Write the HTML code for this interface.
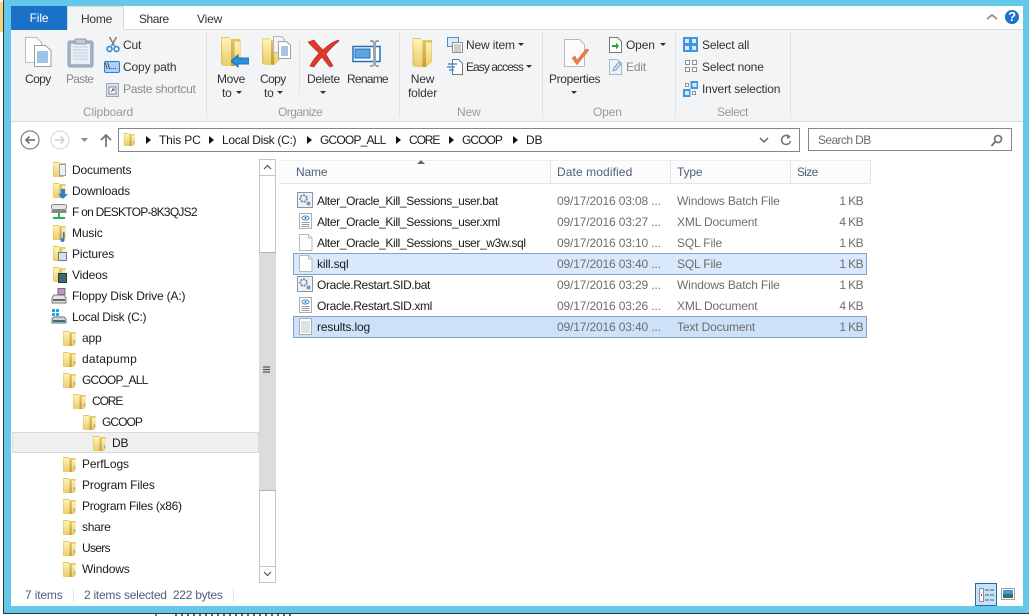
<!DOCTYPE html>
<html><head><meta charset="utf-8"><style>
html,body{margin:0;padding:0;background:#fff}
#r{position:relative;width:1029px;height:616px;overflow:hidden;background:#fff;font-family:"Liberation Sans",sans-serif;font-size:12px;color:#1a1a1a}
#r div,#r svg{position:absolute}
.t{white-space:nowrap;line-height:16px;letter-spacing:-.15px}
.g{color:#8a8a8a}.s{color:#9a9a9a}.c{text-align:center}
.d{color:#6d6d6d}.h{color:#4c607a}
.b{background:#e2e3e4;width:1px}
.k{text-align:right;width:40px;left:823px;letter-spacing:-.6px}
.a{letter-spacing:-.38px}
</style></head><body><div id="r">
<svg width="0" height="0"><defs>
<linearGradient id="y" x1="0" y1="0" x2="0" y2="1"><stop offset="0" stop-color="#fdf3b6"/><stop offset="1" stop-color="#eccb6c"/></linearGradient>
<linearGradient id="z" x1="0" y1="0" x2="0" y2="1"><stop offset="0" stop-color="#e3c366"/><stop offset="1" stop-color="#c49c3a"/></linearGradient>
<symbol id="f" viewBox="0 0 16 18"><path d="M1 1h6l1 1h6.500v13l-2 2H2l-1-1z" fill="#e6c565"/><path d="M1.500 2h6.500v15H2z" fill="url(#y)"/><path d="M8 2.500l2.500 1V17H8z" fill="url(#z)"/><path d="M10.500 3.500L14.500 4v11l-4 2z" fill="url(#y)"/><path d="M13.200 11v2.500" stroke="#5c9ed8"/></symbol>
<symbol id="F" viewBox="0 0 22 32"><path d="M1 1h8l2 2h9.500v22l-6 5H3l-2-2z" fill="#e4c060"/><path d="M1.500 2H11v28H3z" fill="url(#y)"/><path d="M11 3.500l3.500 1.500v25H11z" fill="url(#z)"/><path d="M14.500 5l5.500 1v19l-5.500 5z" fill="url(#y)"/></symbol>
<symbol id="p" viewBox="0 0 15 17"><path d="M1.500 .5h9l3.500 3.500v12.500h-12.500z" fill="#fff" stroke="#b9b9b9"/><path d="M10.500 .5v3.500h3.500" fill="#eee" stroke="#b9b9b9"/></symbol>
<symbol id="bat" viewBox="0 0 16 16"><rect x=".5" y=".5" width="15" height="15" fill="#eef1f5" stroke="#8c96a3"/><circle cx="6.500" cy="6.500" r="3.300" fill="none" stroke="#74828f" stroke-width="1.800" stroke-dasharray="2 1"/><circle cx="11.500" cy="11.500" r="2" fill="#6d9ac7"/></symbol>
<symbol id="xml" viewBox="0 0 15 16"><path d="M1.500 .5h12v15h-12z" fill="#fff" stroke="#adadad"/><ellipse cx="7.500" cy="5" rx="3.500" ry="2" fill="#fff" stroke="#3f8fd0"/><circle cx="7.500" cy="5" r="1" fill="#2a78bc"/><path d="M3.500 9.500h8M3.500 11.500h8M3.500 13.500h8" stroke="#9a9a9a"/></symbol>
</defs></svg>

<!-- window frame -->
<div style="left:0;top:0;width:4px;height:616px;background:#fff"></div>
<div style="left:0;top:2px;width:4px;height:30px;background:#f2d780"></div>
<div style="left:3px;top:0;width:1px;height:614px;background:#333"></div>
<div style="left:4px;top:0;width:1025px;height:613px;background:#63c8ea"></div>
<div style="left:3px;top:613px;width:1026px;height:1px;background:#333"></div>
<div style="left:11px;top:6px;width:1012px;height:600px;background:#fff"></div>
<div style="left:155px;top:614px;width:2px;height:2px;background:#777"></div>
<div style="left:175px;top:614px;width:120px;height:2px;background:repeating-linear-gradient(90deg,#666 0 2px,transparent 2px 6px)"></div>

<!-- ribbon -->
<div style="left:11px;top:29px;width:1012px;height:93px;background:#f3f4f6;border-top:1px solid #dadbdc;border-bottom:1px solid #dadbdc;box-sizing:border-box"></div>
<div style="left:11px;top:6px;width:56px;height:24px;background:#1a72c8"></div>
<div class="t c" style="left:11px;top:10px;width:56px;color:#fff">File</div>
<div style="left:67px;top:6px;width:57px;height:24px;background:#f3f4f6;border:1px solid #dadbdc;border-bottom:0;box-sizing:border-box"></div>
<div class="t" style="left:81px;top:11px;color:#333;letter-spacing:-.25px">Home</div>
<div class="t" style="left:139px;top:11px;color:#333;letter-spacing:-.45px">Share</div>
<div class="t" style="left:197px;top:11px;color:#333">View</div>
<svg style="left:985px;top:12px" width="14" height="9"><path d="M2 7l5-4 5 4" fill="none" stroke="#9a9a9a" stroke-width="2"/></svg>
<div style="left:1005px;top:10px;width:14px;height:14px;border-radius:50%;background:#1a72c8"></div>
<div class="t c" style="left:1005px;top:9px;width:14px;color:#fff;font-weight:bold;font-size:13px">?</div>
<!-- separators -->
<div class="b" style="left:206px;top:32px;height:86px"></div>
<div class="b" style="left:399px;top:32px;height:86px"></div>
<div class="b" style="left:542px;top:32px;height:86px"></div>
<div class="b" style="left:675px;top:32px;height:86px"></div>
<div class="b" style="left:790px;top:32px;height:86px"></div>
<div class="b" style="left:299px;top:39px;height:55px"></div>

<!-- Clipboard -->
<svg style="left:24px;top:36px" width="29" height="32" viewBox="0 0 29 32"><path d="M1.500 1.500h11l5 5v20h-16z" fill="#fff" stroke="#bcbcbc"/><path d="M10.500 9.500h11l5.500 5v16h-16.500z" fill="#fff" stroke="#9d9d9d"/><path d="M13 16h11M13 18h11M13 20h11M13 22h11M13 24h11M13 26h11" stroke="#3f8ad4"/></svg>
<svg style="left:67px;top:37px" width="27" height="31" viewBox="0 0 27 31"><rect x="1" y="4" width="25" height="26" rx="2" fill="#a7b3c7" stroke="#8d9ab0"/><rect x="4" y="7" width="19" height="20" fill="#e9eef6"/><path d="M6 10h15M6 13h15M6 16h15M6 19h15M6 22h15" stroke="#c3cede"/><rect x="8" y="2" width="11" height="5" rx="1" fill="#c0c9d6" stroke="#8d9ab0"/></svg>
<div class="t" style="left:25px;top:71px;letter-spacing:-.6px;color:#333">Copy</div>
<div class="t g" style="left:66px;top:71px;letter-spacing:-.7px">Paste</div>
<svg style="left:106px;top:36px" width="14" height="17" viewBox="0 0 14 17"><path d="M3.500 1l5 9M10.500 1l-5 9" stroke="#7e7e7e" stroke-width="1.500"/><circle cx="3.500" cy="13" r="2.500" fill="none" stroke="#2a83d6" stroke-width="1.500"/><circle cx="10.500" cy="13" r="2.500" fill="none" stroke="#2a83d6" stroke-width="1.500"/></svg>
<div class="t" style="left:123px;top:37px;color:#333">Cut</div>
<div style="left:104px;top:61px;width:14px;height:10px;background:#a9d2f6;border:1px solid #2a7fcf;border-radius:2px"></div>
<div class="t" style="left:105px;top:58px;font-size:9px;color:#123">\\...</div>
<div class="t" style="left:123px;top:59px;color:#333">Copy path</div>
<svg style="left:106px;top:82px" width="13" height="15" viewBox="0 0 13 15"><rect x=".5" y="1.500" width="12" height="13" fill="#dde2ea" stroke="#9da8b8"/><rect x="3" y="5" width="7" height="7" fill="#fff" stroke="#7c8796"/><path d="M5 10l3-3M6 7h2v2" stroke="#667" fill="none"/></svg>
<div class="t g" style="left:123px;top:81px;letter-spacing:-.3px">Paste shortcut</div>
<div class="t s" style="left:83px;top:104px">Clipboard</div>

<!-- Organize -->
<svg style="left:220px;top:36px" width="22" height="32"><use href="#F" width="22" height="32"/></svg>
<svg style="left:231px;top:54px" width="18" height="14" viewBox="0 0 18 14"><path d="M0 7l7-6v3h11v6H7v3z" fill="#2b8fdc" stroke="#1c6fb8"/></svg>
<div class="t" style="left:217px;top:71px;letter-spacing:-.35px;color:#333">Move</div>
<div class="t" style="left:222px;top:85px;color:#333">to</div>
<svg style="left:236px;top:91px" width="6" height="4"><path d="M0 0h6l-3 3z" fill="#333"/></svg>
<svg style="left:261px;top:36px" width="20" height="32"><use href="#F" width="20" height="32"/></svg>
<svg style="left:272px;top:36px" width="19" height="23" viewBox="0 0 19 23"><path d="M1.500.5h8l3 3v13h-11z" fill="#f4f4f4" stroke="#b5b5b5"/><path d="M6.500 5.500h8l4 4v13h-12z" fill="#fff" stroke="#9f9f9f"/><path d="M9 11h7M9 13h7M9 15h7M9 17h7M9 19h7" stroke="#4b8fcf"/></svg>
<div class="t" style="left:260px;top:71px;letter-spacing:-.6px;color:#333">Copy</div>
<div class="t" style="left:264px;top:85px;color:#333">to</div>
<svg style="left:277px;top:91px" width="6" height="4"><path d="M0 0h6l-3 3z" fill="#333"/></svg>
<svg style="left:307px;top:39px" width="33" height="29" viewBox="0 0 33 29"><path d="M1 3l6-2c3 4 6 7 9 10 4-4 9-8 15-10l1 1c-5 4-9 8-13 13 2 4 5 8 7 12l-3 1c-3-3-6-7-8-10-3 3-6 7-8 10l-4-1c2-5 6-9 9-13C8 10 4 7 1 3z" fill="#dd3a2c" stroke="#b22a20" stroke-width=".6"/></svg>
<div class="t" style="left:307px;top:71px;letter-spacing:-.3px;color:#333">Delete</div>
<svg style="left:320px;top:91px" width="6" height="4"><path d="M0 0h6l-3 3z" fill="#333"/></svg>
<svg style="left:352px;top:39px" width="30" height="28" viewBox="0 0 30 28"><rect x="1" y="7.500" width="27" height="15" fill="#fff" stroke="#1f6fb5" stroke-width="1.500"/><rect x="3" y="10" width="15" height="9" fill="#5aa6e0" stroke="#1f6fb5"/><path d="M18 2h2.500l2 2 2-2H27M18 27h2.500l2-2 2 2H27" fill="none" stroke="#8a8f96" stroke-width="1.500"/><rect x="21" y="3" width="3" height="23" fill="#a0a5ab"/></svg>
<div class="t" style="left:347px;top:71px;letter-spacing:-.75px;color:#333">Rename</div>
<div class="t s" style="left:278px;top:104px;letter-spacing:-.55px">Organize</div>

<!-- New -->
<svg style="left:411px;top:37px" width="23" height="32"><use href="#F" width="23" height="32"/></svg>
<div class="t c" style="left:400px;top:71px;width:45px;color:#333">New</div>
<div class="t c" style="left:400px;top:85px;width:45px;color:#333">folder</div>
<svg style="left:447px;top:37px" width="16" height="16" viewBox="0 0 16 16"><rect x=".5" y=".5" width="11" height="9" fill="#dcebfa" stroke="#4b90d0"/><path d="M5.500 5.500h10v10h-10z" fill="#fff" stroke="#8e8e8e"/><path d="M7 8h7M7 10h7M7 12h7M7 14h7" stroke="#999"/></svg>
<div class="t" style="left:466px;top:37px;color:#333">New item</div>
<svg style="left:518px;top:43px" width="6" height="4"><path d="M0 0h6l-3 3z" fill="#333"/></svg>
<svg style="left:447px;top:59px" width="16" height="16" viewBox="0 0 16 16"><path d="M5.500.5h6l4 4v11h-10z" fill="#fff" stroke="#777"/><path d="M1 5h9M0 8h8M2 11h5" stroke="#2b80d2" stroke-width="1.300"/></svg>
<div class="t" style="left:466px;top:59px;letter-spacing:-.95px;color:#333">Easy access</div>
<svg style="left:526px;top:65px" width="6" height="4"><path d="M0 0h6l-3 3z" fill="#333"/></svg>
<div class="t s" style="left:457px;top:104px">New</div>

<!-- Open -->
<svg style="left:563px;top:39px" width="28" height="30" viewBox="0 0 28 30"><path d="M1.500.5h15l5 5v22h-20z" fill="#fbfbfb" stroke="#b9b9b9"/><path d="M9 19l5 7 12-15-3-1-9 11-2-4z" fill="#ee7c4a" stroke="#d9643a" stroke-width=".5"/></svg>
<div class="t" style="left:549px;top:71px;letter-spacing:-.35px;color:#333">Properties</div>
<svg style="left:571px;top:91px" width="6" height="4"><path d="M0 0h6l-3 3z" fill="#333"/></svg>
<svg style="left:609px;top:37px" width="13" height="16" viewBox="0 0 13 16"><path d="M.5.500h8l4 4v11H.5z" fill="#fff" stroke="#777"/><path d="M3 8h4V5.500L10 9l-3 3.500V10H3z" fill="#25a13a"/></svg>
<div class="t" style="left:626px;top:37px;color:#333">Open</div>
<svg style="left:660px;top:43px" width="6" height="4"><path d="M0 0h6l-3 3z" fill="#333"/></svg>
<svg style="left:609px;top:59px" width="14" height="16" viewBox="0 0 14 16"><path d="M.5.500h8l4 4v11H.5z" fill="#eef3fa" stroke="#a8b8cc"/><path d="M4 12l1-3 5-6 2 2-5 6z" fill="#d5e3f2" stroke="#7fa1c8"/></svg>
<div class="t g" style="left:626px;top:59px">Edit</div>
<div class="t s" style="left:593px;top:104px">Open</div>

<!-- Select -->
<svg style="left:683px;top:37px" width="15" height="15"><rect width="15" height="15" fill="#3f97e4"/><path d="M2 2h4v4H2zM9 2h4v4H9zM2 9h4v4H2zM9 9h4v4H9z" fill="#d8ebfb"/></svg>
<div class="t" style="left:702px;top:37px;color:#333">Select all</div>
<svg style="left:685px;top:60px" width="12" height="12"><path d="M.5.500h4v4h-4zM7.500.500h4v4h-4zM.5 7.500h4v4h-4zM7.500 7.500h4v4h-4z" fill="#fff" stroke="#8f8f8f"/></svg>
<div class="t" style="left:702px;top:59px;color:#333">Select none</div>
<svg style="left:683px;top:81px" width="15" height="16"><rect x="7.500" y="0" width="7.500" height="8" fill="#3f97e4"/><rect x="0" y="8" width="7.500" height="8" fill="#3f97e4"/><path d="M2 10h4v4H2zM9.500 2h4v4h-4z" fill="#d8ebfb"/><path d="M2.500 2.500h3v3h-3zM9.500 10.500h3v3h-3z" fill="#fff" stroke="#8f8f8f"/></svg>
<div class="t" style="left:702px;top:81px;color:#333">Invert selection</div>
<div class="t s" style="left:717px;top:104px;letter-spacing:-.4px">Select</div>

<!-- nav -->
<svg style="left:20px;top:130px" width="20" height="20" viewBox="0 0 20 20"><circle cx="10" cy="10" r="9" fill="#fff" stroke="#7e7e7e" stroke-width="1.200"/><path d="M15 10H6M9.500 6.500L6 10l3.500 3.500" fill="none" stroke="#666" stroke-width="1.500"/></svg>
<svg style="left:50px;top:130px" width="20" height="20" viewBox="0 0 20 20"><circle cx="10" cy="10" r="9" fill="#fff" stroke="#d8d8d8" stroke-width="1.200"/><path d="M5 10h9M10.500 6.500L14 10l-3.500 3.500" fill="none" stroke="#d0d0d0" stroke-width="1.500"/></svg>
<svg style="left:81px;top:138px" width="7" height="5"><path d="M0 0h7L3.500 4z" fill="#888"/></svg>
<svg style="left:100px;top:133px" width="12" height="14" viewBox="0 0 12 14"><path d="M6 14V2M1 7l5-5 5 5" fill="none" stroke="#777" stroke-width="1.800"/></svg>
<div style="left:118px;top:128px;width:682px;height:24px;background:#fff;border:1px solid #858585;box-sizing:border-box"></div>
<svg style="left:123px;top:131px" width="13" height="17"><use href="#f" width="13" height="17"/></svg>
<svg style="left:146px;top:136px" width="5" height="8"><path d="M0 0l5 4-5 4z" fill="#111"/></svg>
<div class="t" style="left:159px;top:132px">This PC</div>
<svg style="left:209px;top:136px" width="5" height="8"><path d="M0 0l5 4-5 4z" fill="#111"/></svg>
<div class="t" style="left:222px;top:132px;letter-spacing:-.3px">Local Disk (C:)</div>
<svg style="left:307px;top:136px" width="5" height="8"><path d="M0 0l5 4-5 4z" fill="#111"/></svg>
<div class="t" style="left:320px;top:132px;letter-spacing:-.8px">GCOOP_ALL</div>
<svg style="left:396px;top:136px" width="5" height="8"><path d="M0 0l5 4-5 4z" fill="#111"/></svg>
<div class="t" style="left:409px;top:132px;letter-spacing:-1.1px">CORE</div>
<svg style="left:449px;top:136px" width="5" height="8"><path d="M0 0l5 4-5 4z" fill="#111"/></svg>
<div class="t" style="left:462px;top:132px;letter-spacing:-.95px">GCOOP</div>
<svg style="left:513px;top:136px" width="5" height="8"><path d="M0 0l5 4-5 4z" fill="#111"/></svg>
<div class="t" style="left:526px;top:132px">DB</div>
<svg style="left:759px;top:137px" width="10" height="7"><path d="M1 1l4 4 4-4" fill="none" stroke="#777" stroke-width="1.600"/></svg>
<svg style="left:780px;top:133px" width="12" height="14" viewBox="0 0 12 14"><path d="M9.500 4A4.500 4.500 0 1 0 10.500 8" fill="none" stroke="#777" stroke-width="1.600"/><path d="M7 1l4 3-4 2z" fill="#777"/></svg>
<div style="left:808px;top:128px;width:204px;height:23px;background:#fff;border:1px solid #858585;box-sizing:border-box"></div>
<div class="t d" style="left:818px;top:132px;letter-spacing:-.6px">Search DB</div>
<svg style="left:990px;top:134px" width="13" height="13" viewBox="0 0 13 13"><circle cx="8" cy="5" r="3.500" fill="none" stroke="#777" stroke-width="1.700"/><path d="M5.500 7.500L1.500 12" stroke="#777" stroke-width="2"/></svg>

<!-- tree -->
<div style="left:12px;top:432px;width:247px;height:21px;background:#f0f0f0;border:1px solid #d9d9d9;box-sizing:border-box"></div>
<svg style="left:52px;top:161px" width="15" height="17"><use href="#f" width="15" height="17"/></svg><div style="left:59px;top:164px;width:7px;height:12px;background:#eef1f4;border:1px solid #9aa0a8;box-sizing:border-box"></div><div class="t" style="left:72px;top:162px">Documents</div>
<svg style="left:52px;top:182px" width="15" height="17"><use href="#f" width="15" height="17"/></svg><svg style="left:58px;top:189px" width="10" height="10"><path d="M3 0h4v5h3L5 10 0 5h3z" fill="#2d82d0"/></svg><div class="t" style="left:72px;top:183px">Downloads</div>
<svg style="left:51px;top:204px" width="16" height="16" viewBox="0 0 16 16"><rect x=".5" y=".5" width="15" height="5" rx="2" fill="#e6e6e6" stroke="#888"/><rect x=".5" y="6" width="15" height="3" fill="#888"/><path d="M8 9v4M2 14h12" stroke="#2fb050" stroke-width="2"/></svg><div class="t" style="left:72px;top:204px;letter-spacing:-.75px">F on DESKTOP-8K3QJS2</div>
<svg style="left:52px;top:224px" width="15" height="17"><use href="#f" width="15" height="17"/></svg><svg style="left:58px;top:232px" width="8" height="10"><path d="M5 0h1.500v8a2 2 0 1 1-1.500-1.800z" fill="#2d82d0"/></svg><div class="t" style="left:72px;top:225px">Music</div>
<svg style="left:52px;top:245px" width="15" height="17"><use href="#f" width="15" height="17"/></svg><div style="left:58px;top:252px;width:9px;height:9px;background:#cfe2ef;border:1px solid #777;box-sizing:border-box"></div><div class="t" style="left:72px;top:246px">Pictures</div>
<svg style="left:52px;top:266px" width="15" height="17"><use href="#f" width="15" height="17"/></svg><div style="left:58px;top:273px;width:9px;height:10px;background:#3e6a78;border:1px solid #333;box-sizing:border-box"></div><div class="t" style="left:72px;top:267px">Videos</div>
<svg style="left:51px;top:288px" width="16" height="16" viewBox="0 0 16 16"><rect x="7" y=".5" width="7" height="6" fill="#b59ac7" stroke="#7a6490"/><path d="M3 7h10l2 3v5H1v-5z" fill="#e3e3e3" stroke="#777"/><rect x="2" y="11" width="12" height="2" fill="#666"/></svg><div class="t" style="left:72px;top:288px">Floppy Disk Drive (A:)</div>
<svg style="left:51px;top:308px" width="16" height="16" viewBox="0 0 16 16"><path d="M1 1h3v3H1zM5 1h3v3H5zM1 5h3v3H1zM5 5h3v3H5z" fill="#1fa9e8"/><path d="M3 9h10l2 2v4H1v-4z" fill="#cfd6dc" stroke="#6b747c"/><rect x="2" y="12" width="12" height="2" fill="#3b6f80"/></svg><div class="t" style="left:72px;top:309px;letter-spacing:-.3px">Local Disk (C:)</div>
<svg style="left:62px;top:330px" width="15" height="17"><use href="#f" width="15" height="17"/></svg><div class="t" style="left:82px;top:330px">app</div>
<svg style="left:62px;top:351px" width="15" height="17"><use href="#f" width="15" height="17"/></svg><div class="t" style="left:82px;top:351px;letter-spacing:.2px">datapump</div>
<svg style="left:62px;top:372px" width="15" height="17"><use href="#f" width="15" height="17"/></svg><div class="t" style="left:82px;top:372px;letter-spacing:-.8px">GCOOP_ALL</div>
<svg style="left:72px;top:393px" width="15" height="17"><use href="#f" width="15" height="17"/></svg><div class="t" style="left:92px;top:393px;letter-spacing:-1.1px">CORE</div>
<svg style="left:82px;top:414px" width="15" height="17"><use href="#f" width="15" height="17"/></svg><div class="t" style="left:102px;top:414px;letter-spacing:-.95px">GCOOP</div>
<svg style="left:92px;top:435px" width="15" height="17"><use href="#f" width="15" height="17"/></svg><div class="t" style="left:112px;top:435px">DB</div>
<svg style="left:62px;top:456px" width="15" height="17"><use href="#f" width="15" height="17"/></svg><div class="t" style="left:82px;top:456px">PerfLogs</div>
<svg style="left:62px;top:477px" width="15" height="17"><use href="#f" width="15" height="17"/></svg><div class="t" style="left:82px;top:477px">Program Files</div>
<svg style="left:62px;top:498px" width="15" height="17"><use href="#f" width="15" height="17"/></svg><div class="t" style="left:82px;top:498px;letter-spacing:-.3px">Program Files (x86)</div>
<svg style="left:62px;top:519px" width="15" height="17"><use href="#f" width="15" height="17"/></svg><div class="t" style="left:82px;top:519px;letter-spacing:-.3px">share</div>
<svg style="left:62px;top:540px" width="15" height="17"><use href="#f" width="15" height="17"/></svg><div class="t" style="left:82px;top:540px;letter-spacing:-.7px">Users</div>
<svg style="left:62px;top:561px" width="15" height="17"><use href="#f" width="15" height="17"/></svg><div class="t" style="left:82px;top:561px">Windows</div>
<!-- scrollbar -->
<div style="left:259px;top:159px;width:17px;height:424px;background:#fff;border:1px solid #c4c4c4;box-sizing:border-box"></div>
<div style="left:259px;top:175px;width:17px;height:1px;background:#c4c4c4"></div>
<div style="left:259px;top:252px;width:17px;height:239px;background:#dcdcdc;border-top:1px solid #b5b5b5;border-bottom:1px solid #b5b5b5;box-sizing:border-box"></div>
<div style="left:259px;top:566px;width:17px;height:1px;background:#c4c4c4"></div>
<svg style="left:263px;top:164px" width="9" height="6"><path d="M1 5l3.500-3.500L8 5" fill="none" stroke="#555" stroke-width="1.200"/></svg>
<svg style="left:263px;top:571px" width="9" height="6"><path d="M1 1l3.500 3.500L8 1" fill="none" stroke="#555" stroke-width="1.200"/></svg>
<svg style="left:263px;top:366px" width="8" height="8"><path d="M0 1h7M0 3.500h7M0 6h7" stroke="#555" stroke-width="1.200"/></svg>

<!-- header -->
<div style="left:279px;top:160px;width:592px;height:24px;background:#fcfcfc;border-bottom:1px solid #e5e5e5;border-top:1px solid #eee;box-sizing:border-box"></div>
<div style="left:550px;top:160px;width:1px;height:24px;background:#e5e5e5"></div>
<div style="left:670px;top:160px;width:1px;height:24px;background:#e5e5e5"></div>
<div style="left:790px;top:160px;width:1px;height:24px;background:#e5e5e5"></div>
<div style="left:870px;top:160px;width:1px;height:24px;background:#e5e5e5"></div>
<svg style="left:417px;top:160px" width="8" height="4"><path d="M0 4l4-4 4 4z" fill="#5a6a80"/></svg>
<div class="t h" style="left:296px;top:164px">Name</div>
<div class="t h" style="left:557px;top:164px;letter-spacing:.1px">Date modified</div>
<div class="t h" style="left:677px;top:164px">Type</div>
<div class="t h" style="left:797px;top:164px;letter-spacing:-.7px">Size</div>

<!-- selections -->
<div style="left:293px;top:253px;width:574px;height:22px;background:#d9e8fb;border:1px solid #7da2ce;box-sizing:border-box"></div>
<div style="left:293px;top:316px;width:574px;height:22px;background:#cde1f9;border:1px solid #7da2ce;box-sizing:border-box"></div>

<!-- files -->
<svg style="left:297px;top:192px" width="16" height="16"><use href="#bat" width="16" height="16"/></svg>
<div class="t a" style="left:317px;top:193px">Alter_Oracle_Kill_Sessions_user.bat</div><div class="t d" style="left:557px;top:193px">09/17/2016 03:08 ...</div><div class="t d" style="left:677px;top:193px">Windows Batch File</div><div class="t d k" style="top:193px">1 KB</div>
<svg style="left:298px;top:213px" width="15" height="16"><use href="#xml" width="15" height="16"/></svg>
<div class="t a" style="left:317px;top:214px">Alter_Oracle_Kill_Sessions_user.xml</div><div class="t d" style="left:557px;top:214px">09/17/2016 03:27 ...</div><div class="t d" style="left:677px;top:214px">XML Document</div><div class="t d k" style="top:214px">4 KB</div>
<svg style="left:298px;top:234px" width="15" height="17"><use href="#p" width="15" height="17"/></svg>
<div class="t a" style="left:317px;top:235px">Alter_Oracle_Kill_Sessions_user_w3w.sql</div><div class="t d" style="left:557px;top:235px">09/17/2016 03:10 ...</div><div class="t d" style="left:677px;top:235px">SQL File</div><div class="t d k" style="top:235px">1 KB</div>
<svg style="left:298px;top:255px" width="15" height="17"><use href="#p" width="15" height="17"/></svg>
<div class="t" style="left:317px;top:256px">kill.sql</div><div class="t d" style="left:557px;top:256px">09/17/2016 03:40 ...</div><div class="t d" style="left:677px;top:256px">SQL File</div><div class="t d k" style="top:256px">1 KB</div>
<svg style="left:297px;top:276px" width="16" height="16"><use href="#bat" width="16" height="16"/></svg>
<div class="t" style="left:317px;top:277px;letter-spacing:-.35px">Oracle.Restart.SID.bat</div><div class="t d" style="left:557px;top:277px">09/17/2016 03:29 ...</div><div class="t d" style="left:677px;top:277px">Windows Batch File</div><div class="t d k" style="top:277px">1 KB</div>
<svg style="left:298px;top:297px" width="15" height="16"><use href="#xml" width="15" height="16"/></svg>
<div class="t" style="left:317px;top:298px;letter-spacing:-.35px">Oracle.Restart.SID.xml</div><div class="t d" style="left:557px;top:298px">09/17/2016 03:26 ...</div><div class="t d" style="left:677px;top:298px">XML Document</div><div class="t d k" style="top:298px">4 KB</div>
<svg style="left:298px;top:318px" width="15" height="17" viewBox="0 0 15 17"><path d="M1.500.5h12v16h-12z" fill="#fff" stroke="#adadad"/><path d="M3 4h9M3 6h9M3 8h9M3 10h9M3 12h9M3 14h9" stroke="#b8c4d2"/></svg>
<div class="t" style="left:317px;top:319px">results.log</div><div class="t d" style="left:557px;top:319px">09/17/2016 03:40 ...</div><div class="t d" style="left:677px;top:319px">Text Document</div><div class="t d k" style="top:319px">1 KB</div>

<!-- status -->
<div class="t h" style="left:25px;top:587px">7 items</div>
<div style="left:73px;top:588px;width:1px;height:14px;background:#e6e6e6"></div>
<div class="t h" style="left:84px;top:587px;letter-spacing:-.25px">2 items selected&nbsp; 222 bytes</div>
<div style="left:233px;top:588px;width:1px;height:14px;background:#e6e6e6"></div>
<div style="left:975px;top:583px;width:22px;height:23px;background:#c5e3f8;border:1px solid #2e6a9e;box-sizing:border-box"></div>
<svg style="left:979px;top:588px" width="15" height="14" viewBox="0 0 15 14"><rect x=".5" y=".5" width="4" height="13" fill="#fff" stroke="#8a8f96"/><path d="M6 2h9M6 7h9M6 12h9" stroke="#4d5e73" stroke-dasharray="4 1"/><rect x="2" y="6" width="1" height="2" fill="#c33"/></svg>
<svg style="left:1001px;top:588px" width="14" height="12" viewBox="0 0 14 12"><rect x=".5" y=".5" width="13" height="11" fill="#fff" stroke="#98a4b3"/><rect x="2" y="2" width="10" height="4" fill="#3f9ae0"/><rect x="2" y="6" width="10" height="4" fill="#3e6d60"/></svg>
</div></body></html>
